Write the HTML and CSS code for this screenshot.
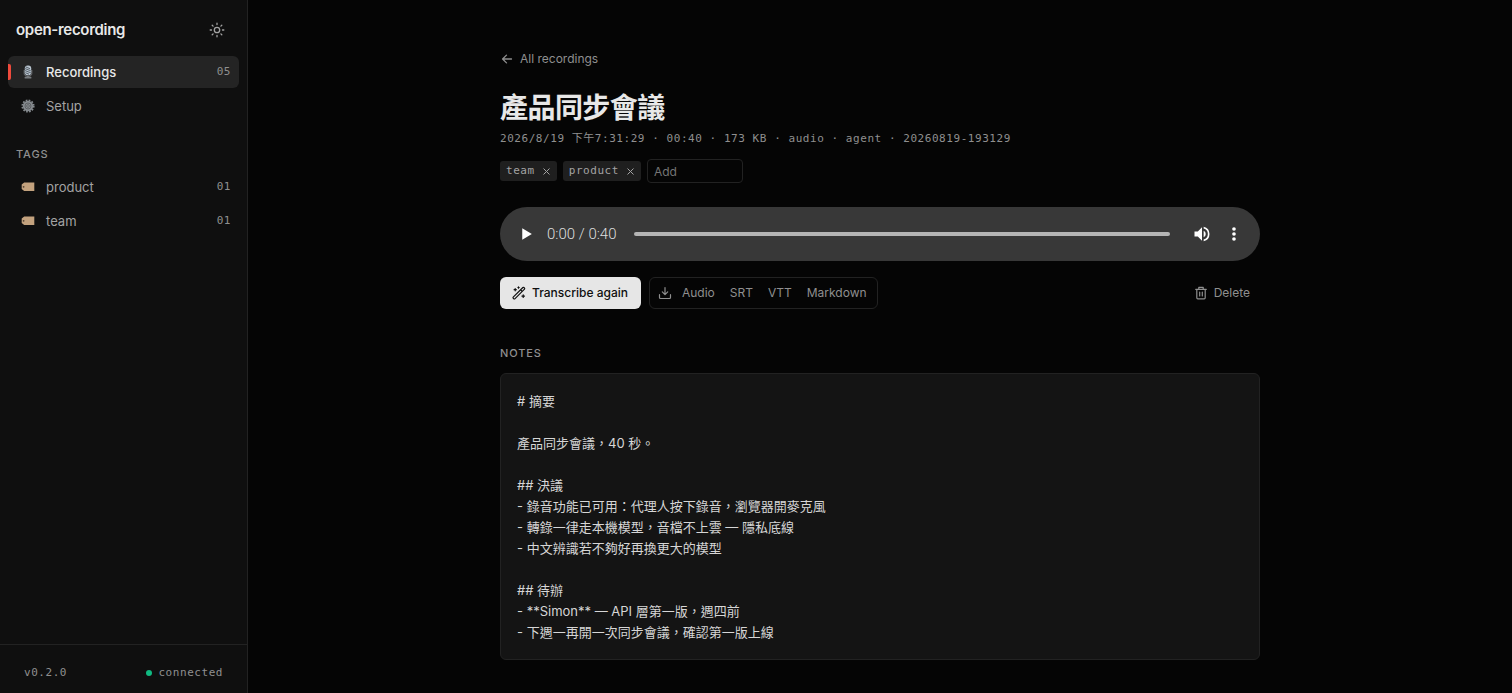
FILE: index.html
```html
<!DOCTYPE html>
<html lang="zh-Hant">
<head>
<meta charset="utf-8">
<meta name="viewport" content="width=device-width, initial-scale=1">
<title>open-recording</title>
<link rel="stylesheet" href="styles.css">
</head>
<body>
<div class="app">
  <aside class="sidebar">
    <header class="brand">
      <span class="brand-name">open-recording</span>
      <button class="icon-button" type="button" aria-label="Toggle theme">
        <svg width="16" height="16" viewBox="0 0 16 16" fill="none" stroke="currentColor" stroke-width="1.3" stroke-linecap="round"><circle cx="8" cy="8" r="2.7"/><path d="M8 1.2v1.3M8 13.5v1.3M1.2 8h1.3M13.500 8h1.3M3.200 3.200l.9.9M11.900 11.900l.9.9M3.200 12.800l.9-.9M11.900 4.100l.9-.9"/></svg>
      </button>
    </header>
    <nav class="nav">
      <a class="nav-item active" href="#recordings">
        <svg class="nav-icon" width="14" height="14" viewBox="0 0 14 14"><path d="M3.200 5v3.400c0 1.900 1.500 3 3.800 3s3.800-1.100 3.800-3V5" fill="none" stroke="#73777b" stroke-width="1"/><rect x="3.800" y=".4" width="6.400" height="9.800" rx="2.800" fill="#b7c3ce"/><path d="M4.500 1.800l4.500 1.900M4.100 3.600l5.700 2.200M4.100 5.600l5.700 2.200M4.400 7.700l3.600 1.500" stroke="#404952" stroke-width=".8"/><path d="M6.200 10.800h1.600v1.400H6.200z" fill="#777"/><rect x="3.600" y="11.800" width="6.800" height="1.800" rx=".5" fill="#777b7f"/></svg>
        <span class="nav-label">Recordings</span><span class="count">05</span>
      </a>
      <a class="nav-item" href="#setup">
        <svg class="nav-icon" width="14" height="14" viewBox="0 0 14 14"><circle cx="7" cy="7" r="5.800" fill="none" stroke="#858a8e" stroke-width="1.600" stroke-dasharray="1.700 1.337"/><circle cx="7" cy="7" r="5.200" fill="#858a8e"/><circle cx="7" cy="7" r="3" fill="none" stroke="#55585b" stroke-width=".8"/><circle cx="7" cy="7" r="1.300" fill="#9a9ea2" stroke="#4a4d50" stroke-width=".7"/></svg>
        <span class="nav-label">Setup</span>
      </a>
    </nav>
    <h2 class="section-label tags-label">Tags</h2>
    <nav class="nav">
      <a class="nav-item" href="#product">
        <svg class="nav-icon" width="14" height="14" viewBox="0 0 14 14"><path d="M3.200 2.400h10.100v8.700H3.200L.7 9V4.500z" fill="#c3a27e"/><circle cx="2.600" cy="6.800" r=".9" fill="#544334"/></svg>
        <span class="nav-label">product</span><span class="count">01</span>
      </a>
      <a class="nav-item" href="#team">
        <svg class="nav-icon" width="14" height="14" viewBox="0 0 14 14"><path d="M3.200 2.400h10.100v8.700H3.200L.7 9V4.500z" fill="#c3a27e"/><circle cx="2.600" cy="6.800" r=".9" fill="#544334"/></svg>
        <span class="nav-label">team</span><span class="count">01</span>
      </a>
    </nav>
    <footer class="status-bar">
      <span>v0.2.0</span>
      <span class="status"><span class="dot"></span>connected</span>
    </footer>
  </aside>

  <main class="main">
    <div class="content">
      <a class="back" href="#all">
        <svg width="14" height="14" viewBox="0 0 14 14" fill="none" stroke="currentColor" stroke-width="1.300" stroke-linecap="round" stroke-linejoin="round"><path d="M11.500 7H2.800M6.500 3.100L2.600 7l3.900 3.900"/></svg>
        All recordings
      </a>
      <h1 class="title">產品同步會議</h1>
      <p class="meta">2026/8/19 下午7:31:29 · 00:40 · 173 KB · audio · agent · 20260819-193129</p>
      <div class="tags">
        <span class="tag">team<button type="button" class="tag-remove" aria-label="Remove team"><svg width="7" height="7" viewBox="0 0 7 7" stroke="currentColor"><path d="M.5.5l6 6M6.500.5l-6 6"/></svg></button></span>
        <span class="tag">product<button type="button" class="tag-remove" aria-label="Remove product"><svg width="7" height="7" viewBox="0 0 7 7" stroke="currentColor"><path d="M.5.5l6 6M6.500.5l-6 6"/></svg></button></span>
        <input class="tag-input" type="text" placeholder="Add" aria-label="Add tag">
      </div>

      <div class="player">
        <button class="player-button" type="button" aria-label="Play"><svg width="20" height="20" viewBox="0 0 24 24" fill="currentColor"><path d="M7.500 5v14l11.500-7z"/></svg></button>
        <span class="time">0:00 / 0:40</span>
        <input class="seek" type="range" min="0" max="40" value="0" aria-label="Seek">
        <button class="player-button" type="button" aria-label="Mute"><svg width="20" height="20" viewBox="0 0 24 24" fill="currentColor"><path d="M3 9v6h4l5 5V4L7 9H3zm13.500 3A4.500 4.500 0 0 0 14 7.970v8.050A4.480 4.480 0 0 0 16.500 12zM14 3.230v2.060a7 7 0 0 1 0 13.420v2.060a9 9 0 0 0 0-17.540z"/></svg></button>
        <button class="player-button" type="button" aria-label="More options"><svg width="20" height="20" viewBox="0 0 24 24" fill="currentColor"><circle cx="12" cy="6" r="2.200"/><circle cx="12" cy="12" r="2.200"/><circle cx="12" cy="18" r="2.200"/></svg></button>
      </div>

      <div class="actions">
        <button class="primary" type="button">
          <svg width="14" height="14" viewBox="0 0 14 14" fill="none" stroke="currentColor" stroke-width="1.200" stroke-linecap="round" stroke-linejoin="round"><path d="M1.200 11.200L10.900 1.500a.7.700 0 0 1 1 0l.6.6a.7.700 0 0 1 0 1L2.800 12.800a.7.700 0 0 1-1 0l-.6-.6a.7.700 0 0 1 0-1zM8.700 3.800l1.500 1.500M3.200 2.600v2.200M2.100 3.700h2.200M11.200 8.800v2.600M9.900 10.100h2.600M6.500.9v1.300M5.900 1.500h1.300"/></svg>
          Transcribe again
        </button>
        <div class="downloads">
          <svg class="download-icon" width="14" height="14" viewBox="0 0 14 14" fill="none" stroke="currentColor" stroke-width="1.200" stroke-linecap="round" stroke-linejoin="round"><path d="M7 1.500v6.800M4.300 5.900L7 8.600l2.700-2.700M1.500 8.700v2.800a1 1 0 0 0 1 1h9a1 1 0 0 0 1-1V8.700"/></svg>
          <a href="#audio">Audio</a><a href="#srt">SRT</a><a href="#vtt">VTT</a><a href="#markdown">Markdown</a>
        </div>
        <button class="delete" type="button">
          <svg width="14" height="14" viewBox="0 0 14 14" fill="none" stroke="currentColor" stroke-width="1.200" stroke-linecap="round" stroke-linejoin="round"><path d="M1.700 3.300h10.600M4.800 3.200V1.300h4.400v1.900M2.800 3.300v8.500a1 1 0 0 0 1 1h6.400a1 1 0 0 0 1-1V3.300M5.700 6v4M8.300 6v4"/></svg>
          Delete
        </button>
      </div>

      <h2 class="section-label notes-label">Notes</h2>
      <div class="notes"># 摘要

產品同步會議，40 秒。

## 決議
- 錄音功能已可用：代理人按下錄音，瀏覽器開麥克風
- 轉錄一律走本機模型，音檔不上雲 — 隱私底線
- 中文辨識若不夠好再換更大的模型

## 待辦
- **Simon** — API 層第一版，週四前
- 下週一再開一次同步會議，確認第一版上線</div>
    </div>
  </main>
</div>
</body>
</html>
```
FILE: styles.css
```css
:root {
  --sans: Inter, "Noto Sans CJK TC", sans-serif;
  --mono: "DejaVu Sans Mono", "Noto Sans CJK TC", monospace;
  --text: #e8e8e8;
  --muted: #a3a3a3;
  --dim: #8f8f8f;
  --line: #222222;
}

* { box-sizing: border-box; }

body {
  margin: 0;
  background: #050505;
  color: var(--text);
  font: 13px/20px var(--sans);
  -webkit-font-smoothing: antialiased;
}

h1, h2, p { margin: 0; }
a { color: inherit; text-decoration: none; }
svg { display: block; flex: none; }

button, input {
  margin: 0;
  padding: 0;
  border: 0;
  background: none;
  color: inherit;
  font: inherit;
}

.app { display: flex; height: 100vh; }

/* Sidebar */
.sidebar {
  display: flex;
  flex-direction: column;
  flex: none;
  width: 248px;
  background: #0f0f0f;
  border-right: 1px solid var(--line);
}

.brand {
  display: flex;
  align-items: center;
  justify-content: space-between;
  padding: 16px 16px 12px;
}

.brand-name { font-size: 15px; font-weight: 600; line-height: 22px; letter-spacing: -0.02em; }

.icon-button {
  display: grid;
  place-items: center;
  width: 28px;
  height: 28px;
  color: var(--muted);
}

.nav { display: flex; flex-direction: column; gap: 2px; padding: 0 8px; }

.nav-item {
  position: relative;
  display: flex;
  align-items: center;
  gap: 11px;
  height: 32px;
  padding: 0 8px 0 13px;
  border-radius: 6px;
  color: var(--muted);
}

.nav-item.active { background: #242424; color: var(--text); font-weight: 500; }

.nav-item.active::before {
  content: "";
  position: absolute;
  left: 0;
  top: 8px;
  width: 3px;
  height: 16px;
  border-radius: 0 2px 2px 0;
  background: #ef4a3c;
}

.nav-label { flex: 1; }

.count {
  color: var(--dim);
  font: 11px/16px var(--mono);
  letter-spacing: 0.05em;
}

.section-label {
  color: var(--dim);
  font-size: 11px;
  font-weight: 500;
  line-height: 16px;
  letter-spacing: 0.08em;
  text-transform: uppercase;
}

.tags-label { padding: 24px 16px 9px; }

.status-bar {
  display: flex;
  align-items: center;
  justify-content: space-between;
  margin-top: auto;
  padding: 20px 24px 12px;
  border-top: 1px solid var(--line);
  color: var(--dim);
  font: 11px/16px var(--mono);
  letter-spacing: 0.05em;
}

.status { display: flex; align-items: center; gap: 6px; }
.dot { width: 6px; height: 6px; border-radius: 50%; background: #10b981; }

/* Recording page */
.main { flex: 1; min-width: 0; overflow: hidden; }

.content { max-width: 760px; margin: 0 auto; padding: 49px 0 32px; }

.back { display: inline-flex; align-items: center; gap: 6px; color: var(--dim); font-size: 12px; }

.title {
  margin-top: 19px;
  font-size: 28px;
  font-weight: 600;
  line-height: 36px;
  letter-spacing: -0.02em;
}

.meta {
  margin-top: 5px;
  color: var(--dim);
  font: 11px/16px var(--mono);
  letter-spacing: 0.05em;
}

.tags { display: flex; align-items: center; gap: 6px; margin-top: 12px; }

.tag {
  display: flex;
  align-items: center;
  gap: 8px;
  height: 20px;
  padding: 0 7px 0 6px;
  border-radius: 3px;
  background: #1f1f1f;
  color: var(--muted);
  font: 11px/16px var(--mono);
  letter-spacing: 0.05em;
}

.tag-remove { padding: 2px 0; }

.tag-input {
  width: 96px;
  height: 24px;
  padding: 0 6px;
  border: 1px solid var(--line);
  border-radius: 4px;
  font-size: 12px;
}

.tag-input::placeholder { color: #757575; }

.player {
  display: flex;
  align-items: center;
  height: 54px;
  margin-top: 24px;
  padding: 0 16px;
  border-radius: 27px;
  background: #383838;
  color: #ffffff;
}

.player-button { display: grid; place-items: center; width: 20px; height: 32px; }
.time { margin: 0 17px 0 11px; color: #dedede; font: 300 15px/20px Roboto, sans-serif; }
.player-button + .player-button { margin-left: 12px; }

.seek {
  flex: 1;
  min-width: 0;
  height: 4px;
  margin-right: 22px;
  border-radius: 2px;
  background: #b5b5b5;
  appearance: none;
}

.seek::-webkit-slider-thumb { appearance: none; width: 0; height: 0; }

.actions { display: flex; align-items: center; gap: 8px; margin-top: 16px; }

.primary {
  display: flex;
  align-items: center;
  gap: 6px;
  height: 32px;
  padding: 0 13px 0 12px;
  border-radius: 6px;
  background: #e6e6e6;
  color: #0f0f0f;
  font-size: 12px;
  font-weight: 500;
}

.downloads {
  display: flex;
  align-items: center;
  gap: 15px;
  height: 32px;
  padding: 0 10px 0 8px;
  border: 1px solid var(--line);
  border-radius: 6px;
  color: var(--dim);
  font-size: 12px;
}

.download-icon { margin-right: -5px; }

.delete {
  display: flex;
  align-items: center;
  gap: 6px;
  height: 32px;
  margin-left: auto;
  padding: 0 10px;
  color: var(--dim);
  font-size: 12px;
}

.notes-label { margin-top: 36px; }

.notes {
  margin-top: 12px;
  padding: 17px 16px 16px;
  border: 1px solid var(--line);
  border-radius: 6px;
  background: #141414;
  color: #d6d6d6;
  line-height: 21px;
  white-space: pre-wrap;
}
```
